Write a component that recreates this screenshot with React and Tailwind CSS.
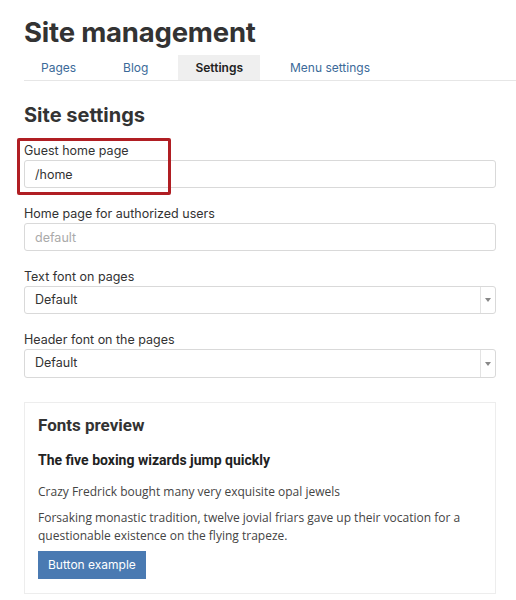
import { useState } from 'react'

const tabs = ['Pages', 'Blog', 'Settings', 'Menu settings']

const inputCls = 'h-[28px] w-full rounded-[3px] border border-[#d9d9d9] bg-white px-[10px] text-[12.5px] text-[#333] outline-none'

function Field({ label, children }) {
  return (
    <div className="mb-[18px]">
      <label className="mb-[1px] block text-[12.5px] leading-[16px] text-[#333]">{label}</label>
      {children}
    </div>
  )
}

function SelectBox({ value, tall }) {
  return (
    <div className={`flex w-full items-stretch rounded-[3px] border border-[#d9d9d9] bg-white ${tall ? 'h-[29px]' : 'h-[28px]'}`}>
      <div className="flex flex-1 items-center px-[10px] text-[12.5px] text-[#333]">{value}</div>
      <div className="flex w-[15px] items-center justify-center border-l border-[#e3e3e3]">
        <svg width="6" height="4" viewBox="0 0 6 4"><path d="M0 0h6L3 4z" fill="#888" /></svg>
      </div>
    </div>
  )
}

export default function App() {
  const [active, setActive] = useState('Settings')
  const [guest, setGuest] = useState('/home')

  return (
    <div className="min-h-[600px] bg-white pl-6 pt-[14px]" style={{ fontFamily: 'Inter, "Noto Sans", sans-serif' }}>
      <h1 className="text-[27.5px] font-bold leading-[36px] tracking-[-0.2px] text-[#333]">Site management</h1>

      <div className="mt-[5px] flex gap-[13px] border-b border-[#e6e6e6]">
        {tabs.map((tab) => (
          <button
            key={tab}
            onClick={() => setActive(tab)}
            className={`h-[25px] px-[17px] text-[12px] ${active === tab ? 'bg-[#efefef] font-semibold text-[#222]' : 'text-[#3b6a99]'}`}
          >
            {tab}
          </button>
        ))}
      </div>

      <div className="w-[472px]">
        <h2 className="mt-[21px] mb-[15px] text-[20px] font-bold leading-[26px] text-[#333]">Site settings</h2>

        <div className="relative">
          <div className="pointer-events-none absolute left-[-7px] top-[-5px] h-[57px] w-[154px] rounded-[2px] border-[3px] border-[#b01e23]" />
          <Field label="Guest home page">
            <input value={guest} onChange={(e) => setGuest(e.target.value)} className={inputCls} />
          </Field>
        </div>

        <Field label="Home page for authorized users">
          <input placeholder="default" className={`${inputCls} placeholder:text-[#aaa]`} />
        </Field>

        <Field label="Text font on pages">
          <SelectBox value="Default" />
        </Field>

        <Field label="Header font on the pages">
          <SelectBox value="Default" tall />
        </Field>

        <div className="mt-[24px] border border-[#ededed] px-[13px] pt-[11px] pb-[14px]">
          <h3 className="text-[17px] font-bold leading-[22px] text-[#333]" style={{ fontFamily: 'Roboto, sans-serif' }}>Fonts preview</h3>
          <h4 className="mt-[14px] text-[14px] font-bold leading-[20px] text-[#222]" style={{ fontFamily: 'Roboto, sans-serif' }}>The five boxing wizards jump quickly</h4>
          <p className="mt-[13px] text-[12px] leading-[18px] text-[#444]" style={{ fontFamily: '"Open Sans", sans-serif' }}>Crazy Fredrick bought many very exquisite opal jewels</p>
          <p className="mt-[8px] text-[12px] leading-[18px] text-[#444]" style={{ fontFamily: '"Open Sans", sans-serif' }}>Forsaking monastic tradition, twelve jovial friars gave up their vocation for a questionable existence on the flying trapeze.</p>
          <button className="mt-[6px] h-[28px] bg-[#4a7ab2] px-[10px] text-[12px] text-white">Button example</button>
        </div>
      </div>
    </div>
  )
}
